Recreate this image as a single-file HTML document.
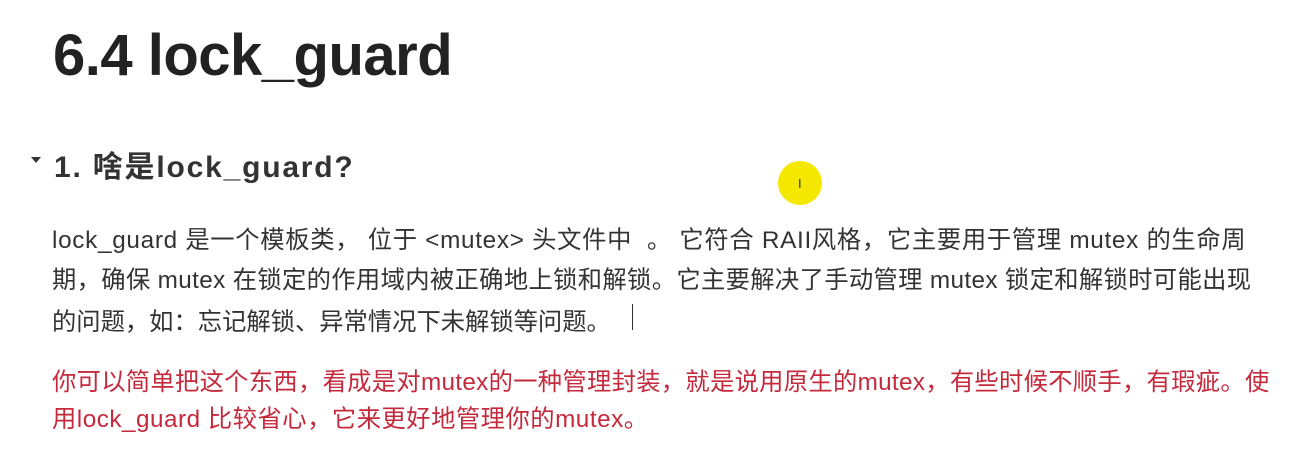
<!DOCTYPE html>
<html><head><meta charset="utf-8"><style>
body{margin:0;width:1301px;height:469px;background:#fff;overflow:hidden;position:relative;font-family:"Liberation Sans","Noto Sans CJK SC",sans-serif;color:#222}
.t{position:absolute;left:53px;top:22px;font-size:58px;font-weight:bold;color:#222;letter-spacing:-0.5px}
.h{position:absolute;left:54px;top:142px;font-size:30px;font-weight:bold;color:#333;letter-spacing:1.8px}
.tri{position:absolute;left:31px;top:157px;width:0;height:0;border-left:5px solid transparent;border-right:5px solid transparent;border-top:6px solid #333}
.l{position:absolute;left:52px;font-size:24.3px;white-space:nowrap;color:#333}
.r{color:#c42a3c}
.dot{position:absolute;left:778px;top:161px;width:44px;height:44px;border-radius:50%;background:#f5e800}
.cur{position:absolute;left:798px;top:176px;font-size:13px;color:#333}
.bar{position:absolute;left:632px;top:304px;width:1px;height:26px;background:#333}
</style></head><body>
<div class="t">6.4 lock_guard</div>
<div class="tri"></div>
<div class="h">1. 啥是lock_guard?</div>
<div class="dot"></div><div class="cur">I</div>
<div class="l" style="top:220px;letter-spacing:0.7px">lock_guard 是一个模板类， 位于 &lt;mutex&gt; 头文件中 &nbsp;。 它符合 RAII风格，它主要用于管理 mutex 的生命周</div>
<div class="l" style="top:260px;letter-spacing:0.35px">期，确保 mutex 在锁定的作用域内被正确地上锁和解锁。它主要解决了手动管理 mutex 锁定和解锁时可能出现</div>
<div class="l" style="top:302px">的问题，如：忘记解锁、异常情况下未解锁等问题。</div>
<div class="bar"></div>
<div class="l r" style="top:362px;letter-spacing:0.3px">你可以简单把这个东西，看成是对mutex的一种管理封装，就是说用原生的mutex，有些时候不顺手，有瑕疵。使</div>
<div class="l r" style="top:399px;letter-spacing:0.5px">用lock_guard 比较省心，它来更好地管理你的mutex。</div>
</body></html>
